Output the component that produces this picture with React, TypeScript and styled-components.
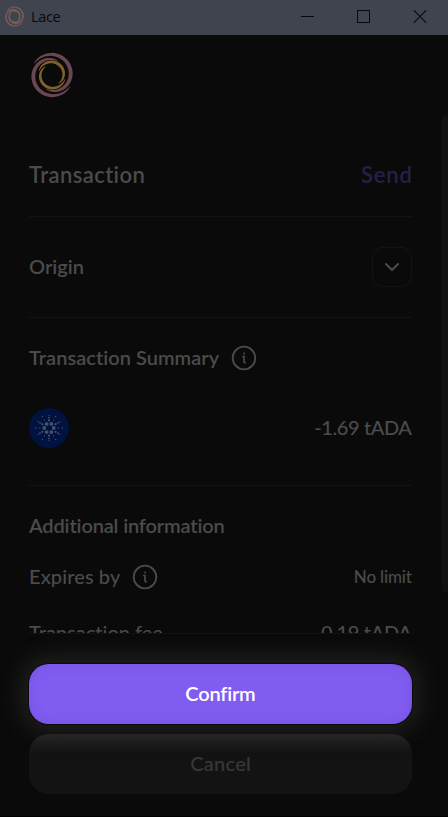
import React from 'react';
import styled, { createGlobalStyle } from 'styled-components';

const GlobalStyle = createGlobalStyle`
  * { box-sizing: border-box; }
  body { margin: 0; background: #0a0a0a; overflow: hidden; }
`;

const Window = styled.div`
  width: 448px;
  height: 817px;
  display: flex;
  flex-direction: column;
  background: #0a0a0a;
  color: #4b4b4b;
  border-bottom: 1px solid #000;
  font-family: Lato, 'Open Sans', sans-serif;
  font-variant-ligatures: none;
  overflow: hidden;
`;

const TitleBar = styled.div`
  height: 35px;
  flex: none;
  display: flex;
  align-items: center;
  padding: 0 21px 2px 4px;
  background: #40444e;
  color: #08090c;
`;

const AppName = styled.span`
  flex: 1;
  margin-left: 6px;
  font: 400 14.5px/20px 'Open Sans', 'Noto Sans', sans-serif;
  letter-spacing: -0.35px;
`;

const WindowControls = styled.div`
  display: flex;
  gap: 43px;
`;

const Header = styled.header`
  height: 80px;
  flex: none;
  padding: 17px 0 0 29px;
`;

const ScrollArea = styled.main`
  height: 518px;
  flex: none;
  display: flex;
  justify-content: space-between;
  overflow: hidden;
`;

const Content = styled.div`
  width: 383px;
  margin-left: 29px;
`;

const ScrollThumb = styled.div`
  width: 6px;
  height: 477px;
  border-radius: 4px 0 0 4px;
  background: #101010;
`;

const Row = styled.div<{ $height: number; $divided?: boolean; $lift?: number }>`
  height: ${p => p.$height}px;
  display: flex;
  align-items: center;
  justify-content: space-between;
  padding-bottom: ${p => p.$lift ?? 0}px;
  border-bottom: ${p => (p.$divided ? '1px solid #131314' : 'none')};
`;

const Label = styled.span<{ $size?: number; $spacing?: number; $weight?: number; $color?: string; $rise?: number }>`
  padding-bottom: ${p => p.$rise ?? 2}px;
  font-size: ${p => p.$size ?? 20}px;
  font-weight: ${p => p.$weight ?? 600};
  line-height: 26px;
  letter-spacing: ${p => p.$spacing ?? 0}px;
  margin-right: ${p => -(p.$spacing ?? 0)}px;
  color: ${p => p.$color ?? 'inherit'};
  white-space: nowrap;
`;

const WithInfo = styled.div`
  display: flex;
  align-items: center;
  gap: 12px;
`;

const Toggle = styled.button`
  width: 40px;
  height: 40px;
  padding: 0;
  display: grid;
  place-items: center;
  background: transparent;
  border: 1px solid #141415;
  border-radius: 11px;
  color: #4b4b4b;
`;

const Footer = styled.footer`
  flex: 1;
  display: flex;
  flex-direction: column;
  gap: 10px;
  margin-right: 36px;
  margin-left: 29px;
  padding-top: 30px;
  border-top: 1px solid #141414;
`;

const Button = styled.button<{ $primary?: boolean }>`
  position: relative;
  z-index: ${p => (p.$primary ? 1 : 0)};
  height: 60px;
  flex: none;
  padding: 0 0 2px;
  border: 0;
  border-radius: 20px;
  font-family: inherit;
  font-variant-ligatures: none;
  color: ${p => (p.$primary ? '#fff' : '#383838')};
  background: ${p => (p.$primary ? '#815cf0' : 'linear-gradient(#292929 0, #1c1c1c 9px, #131313 20px)')};
  box-shadow: ${p =>
    p.$primary ? '0 0 1px 1px #0c0b10, 0 0 22px 8px #20201f, inset 0 0 12px rgba(94, 64, 190, 0.3)' : 'none'};
`;

/* A blade that winds clockwise inwards and tapers to a point at both ends. */
const blade = (start: number, sweep: number, from: number, to: number, width: number) => {
  const steps = 48;
  const edge = (side: number) =>
    Array.from({ length: steps + 1 }, (_, i) => {
      const t = i / steps;
      const angle = ((start + sweep * t) * Math.PI) / 180;
      const thickness = width * Math.pow(Math.sin(Math.PI * Math.min(t, 0.9999)), 0.6);
      const r = from + (to - from) * Math.pow(t, 1.5) + (side * thickness) / 2;
      return `${(r * Math.cos(angle)).toFixed(2)} ${(r * Math.sin(angle)).toFixed(2)}`;
    });
  return `M${[...edge(1), ...edge(-1).reverse()].join('L')}Z`;
};

const LaceMark = ({ size, pink = '#6a4750', gold = '#80602c' }: { size: number; pink?: string; gold?: string }) => (
  <svg width={size} height={size} viewBox="-23 -23 46 46">
    {[0, 180].map(turn => (
      <g key={turn} transform={`rotate(${turn})`}>
        <path d={blade(210, 265, 21.3, 15, 3.9)} fill={pink} />
        <path d={blade(195, 220, 13.7, 10.6, 3)} fill={gold} />
      </g>
    ))}
  </svg>
);

const InfoIcon = () => (
  <svg width="26" height="26" viewBox="0 0 26 26" fill="none" stroke="#4b4b4b">
    <circle cx="13" cy="13" r="11.3" strokeWidth="1.8" />
    <path d="M11.2 11.5H13V16.7Q13 17.8 14.8 17.8" strokeWidth="1.7" />
    <circle cx="13.1" cy="8.4" r="1" fill="#4b4b4b" stroke="none" />
  </svg>
);

const RINGS = [
  { n: 6, r: 4.7, dot: 1.9, turn: 0 },
  { n: 6, r: 7.6, dot: 1.1, turn: 30 },
  { n: 6, r: 9.2, dot: 0.65, turn: 0 },
  { n: 6, r: 10.4, dot: 0.9, turn: 30 },
  { n: 6, r: 13.2, dot: 0.7, turn: 0 },
  { n: 6, r: 12.7, dot: 0.6, turn: 30 },
];

const CardanoIcon = () => (
  <svg width="40" height="40" viewBox="0 0 40 40">
    <circle cx="20" cy="20" r="20" fill="#00123f" />
    {RINGS.flatMap((ring, k) =>
      Array.from({ length: ring.n }, (_, i) => {
        const t = ((ring.turn + (i * 360) / ring.n) * Math.PI) / 180;
        return (
          <circle
            key={`${k}-${i}`}
            cx={20 + ring.r * Math.cos(t)}
            cy={20 + ring.r * Math.sin(t)}
            r={ring.dot}
            fill="#48516b"
          />
        );
      }),
    )}
  </svg>
);

export default function App() {
  return (
    <>
      <GlobalStyle />
      <Window>
        <TitleBar>
          <LaceMark size={21} pink="#795563" gold="#8a6a45" />
          <AppName>Lace</AppName>
          <WindowControls>
            <svg width="13" height="13" viewBox="0 0 13 13" stroke="#08090c"><path d="M0 6.5H13" /></svg>
            <svg width="13" height="13" viewBox="0 0 13 13" stroke="#08090c" fill="none"><rect x=".5" y=".5" width="12" height="12" /></svg>
            <svg width="14" height="13" viewBox="0 0 14 13" stroke="#08090c"><path d="M.7.2L13.3 12.8M13.3.2L.7 12.8" strokeWidth="1.1" /></svg>
          </WindowControls>
        </TitleBar>
        <Header><LaceMark size={46} /></Header>
        <ScrollArea>
          <Content>
            <Row $height={18} />
            <Row $height={84} $divided>
              <Label $size={22} $spacing={0.4} $rise={0}>Transaction</Label>
              <Label $size={22} $spacing={0.9} $rise={0} $color="#272046">Send</Label>
            </Row>
            <Row $height={101} $divided>
              <Label>Origin</Label>
              <Toggle aria-label="Expand origin">
                <svg width="16" height="10" viewBox="0 0 16 10" fill="none" stroke="currentColor" strokeWidth="2" strokeLinecap="round" strokeLinejoin="round"><path d="M2 2L8 8L14 2" /></svg>
              </Toggle>
            </Row>
            <Row $height={80}>
              <WithInfo><Label $spacing={0.03}>Transaction Summary</Label><InfoIcon /></WithInfo>
            </Row>
            <Row $height={88} $divided $lift={28}>
              <CardanoIcon />
              <Label $weight={500} $spacing={-0.4}>-1.69 tADA</Label>
            </Row>
            <Row $height={80}><Label $spacing={-0.15}>Additional information</Label></Row>
            <Row $height={22}>
              <WithInfo><Label $weight={500} $spacing={0.1}>Expires by</Label><InfoIcon /></WithInfo>
              <Label $size={17} $weight={500} $spacing={-0.15} $rise={0}>No limit</Label>
            </Row>
            <Row $height={90}>
              <Label $weight={500}>Transaction fee</Label>
              <Label $weight={500} $spacing={-0.35}>0.19 tADA</Label>
            </Row>
          </Content>
          <ScrollThumb />
        </ScrollArea>
        <Footer>
          <Button $primary><Label $spacing={-0.2}>Confirm</Label></Button>
          <Button><Label $weight={500} $spacing={0.25}>Cancel</Label></Button>
        </Footer>
      </Window>
    </>
  );
}
